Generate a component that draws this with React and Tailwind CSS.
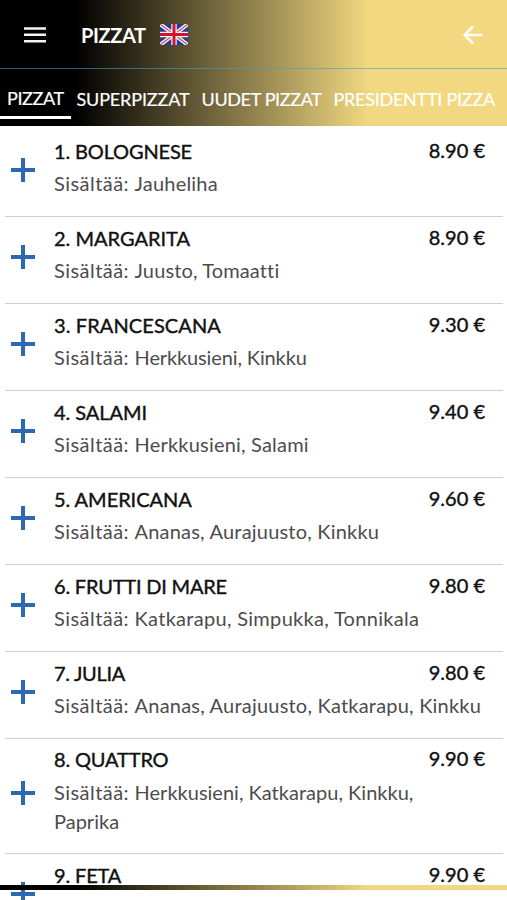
import React, { useState } from 'react';

const tabs = [
    { label: 'PIZZAT', style: 'w-[57px] tracking-[-0.4px] -mt-px' },
    { label: 'SUPERPIZZAT', style: 'w-[113px] tracking-[-0.15px]' },
    { label: 'UUDET PIZZAT', style: 'w-[120px] tracking-[-0.35px]' },
    { label: 'PRESIDENTTI PIZZA', style: 'w-[162px] tracking-[-0.25px]' },
];

const menu = [
    {
        name: '1. BOLOGNESE',
        contents: 'Jauheliha',
        price: '8.90 €',
        nameStyle: 'tracking-[-0.15px]',
        contentStyle: 'tracking-[0.2px]',
    },
    {
        name: '2. MARGARITA',
        contents: 'Juusto, Tomaatti',
        price: '8.90 €',
        nameStyle: 'tracking-[0px]',
        contentStyle: 'tracking-[0.13px]',
    },
    {
        name: '3. FRANCESCANA',
        contents: 'Herkkusieni, Kinkku',
        price: '9.30 €',
        nameStyle: 'tracking-[0.1px]',
        contentStyle: 'tracking-[-0.13px]',
    },
    {
        name: '4. SALAMI',
        contents: 'Herkkusieni, Salami',
        price: '9.40 €',
        nameStyle: 'tracking-[-0.05px]',
        contentStyle: 'tracking-[0.2px]',
    },
    {
        name: '5. AMERICANA',
        contents: 'Ananas, Aurajuusto, Kinkku',
        price: '9.60 €',
        nameStyle: 'tracking-[-0.05px]',
        contentStyle: 'tracking-[0.2px]',
    },
    {
        name: '6. FRUTTI DI MARE',
        contents: 'Katkarapu, Simpukka, Tonnikala',
        price: '9.80 €',
        nameStyle: 'tracking-[-0.2px]',
        contentStyle: 'tracking-[0.3px]',
    },
    {
        name: '7. JULIA',
        contents: 'Ananas, Aurajuusto, Katkarapu, Kinkku',
        price: '9.80 €',
        nameStyle: 'tracking-[-0.3px]',
        contentStyle: 'tracking-[0.21px]',
    },
    {
        name: '8. QUATTRO',
        contents: 'Herkkusieni, Katkarapu, Kinkku, Paprika',
        price: '9.90 €',
        nameStyle: 'tracking-[-0.15px]',
        contentStyle: 'tracking-[0.01px]',
    },
    {
        name: '9. FETA',
        contents: '',
        price: '9.90 €',
        nameStyle: 'tracking-[-0.15px]',
        contentStyle: '',
    },
];

function Flag() {
    return (
        <svg className="ml-[14px] h-[21px] w-[28px]" viewBox="0 0 28 21">
            <rect width="28" height="21" fill="#1f3f94" />
            <path d="M0 0L28 21M28 0L0 21" stroke="#f4f1f4" strokeWidth="4" />
            <path d="M0 0L28 21M28 0L0 21" stroke="#d8405a" strokeWidth="1.2" />
            <path d="M14 0V21M0 10.5H28" stroke="#f8f0f2" strokeWidth="5.4" />
            <path d="M14 0V21M0 10.5H28" stroke="#d3122e" strokeWidth="3" />
        </svg>
    );
}

function MenuRow({ item }) {
    return (
        <div className="ml-[5px] mr-[4px] flex shrink-0 items-center border-b border-[#cfcfcf] pb-[5px]">
            <svg className="mb-[1.6px] ml-[5px] mr-[18px] h-[26px] w-[26px] shrink-0 cursor-pointer" viewBox="0 0 26 26">
                <path d="M13 1V25M1 13H25" stroke="#2d69b3" strokeWidth="4" />
            </svg>
            <div className="flex-1">
                <div className="flex h-[39.4px] justify-between pr-[18px] pt-[6.6px] text-[20px] leading-[29px] text-[#111] [-webkit-text-stroke:0.4px_#111]">
                    <div className={item.nameStyle}>{item.name}</div>
                    <div className="-mt-px">{item.price}</div>
                </div>
                <div className="min-h-[41.6px] pb-[13.2px] pr-[21px] text-[20px] leading-[28.4px] text-[#4c4c4c]">
                    {item.contents && (
                        <>
                            <span className="tracking-[0.45px]">Sisältää: </span>
                            <span className={item.contentStyle}>{item.contents}</span>
                        </>
                    )}
                </div>
            </div>
        </div>
    );
}

function App() {
    const [active, setActive] = useState(0);

    return (
        <div className="relative flex h-screen w-full flex-col overflow-hidden bg-white font-['Lato',sans-serif]">
            <div className="shrink-0 bg-[linear-gradient(90deg,#000_15%,#f2d981_73%)] text-white">
                <div className="flex h-[69px] items-center border-b border-[#4d9dba]/60 pt-px">
                    <svg className="ml-[23px] h-[18px] w-[24px] shrink-0" viewBox="0 0 24 18">
                        <path d="M1 2.5H23M1 8.8H23M1 15.2H23" stroke="#f4f4f4" strokeWidth="2.5" />
                    </svg>
                    <div className="ml-[34px] text-[20px] font-bold tracking-[-0.4px]">PIZZAT</div>
                    <Flag />
                    <svg className="ml-auto mr-[23px] h-[22px] w-[22px]" viewBox="0 0 22 22" fill="none">
                        <path d="M20.5 11H3M11 2.5L2.5 11L11 19.5" stroke="#fffdf5" strokeWidth="2.5" />
                    </svg>
                </div>
                <div className="flex h-[57px] gap-[6px] whitespace-nowrap text-[18px] [-webkit-text-stroke:0.2px_#fff]">
                    {tabs.map((tab, i) => (
                        <div
                            key={tab.label}
                            className={`h-[50px] cursor-pointer pt-[16px] leading-[28px] ${i === 0 ? 'pl-[7px] pr-[6.5px]' : 'pr-[6px]'} ${
                                i === active ? 'border-b-[3px] border-white' : ''
                            }`}
                            onClick={() => setActive(i)}
                        >
                            <div className={tab.style}>{tab.label}</div>
                        </div>
                    ))}
                </div>
            </div>
            <div className="flex flex-1 flex-col overflow-hidden pt-[4px]">
                {menu.map((item) => (
                    <MenuRow key={item.name} item={item} />
                ))}
            </div>
            <div className="absolute bottom-[10px] left-0 h-[5px] w-full bg-[linear-gradient(90deg,#000_15%,#f2d981_73%)]" />
        </div>
    );
}

export default App;
